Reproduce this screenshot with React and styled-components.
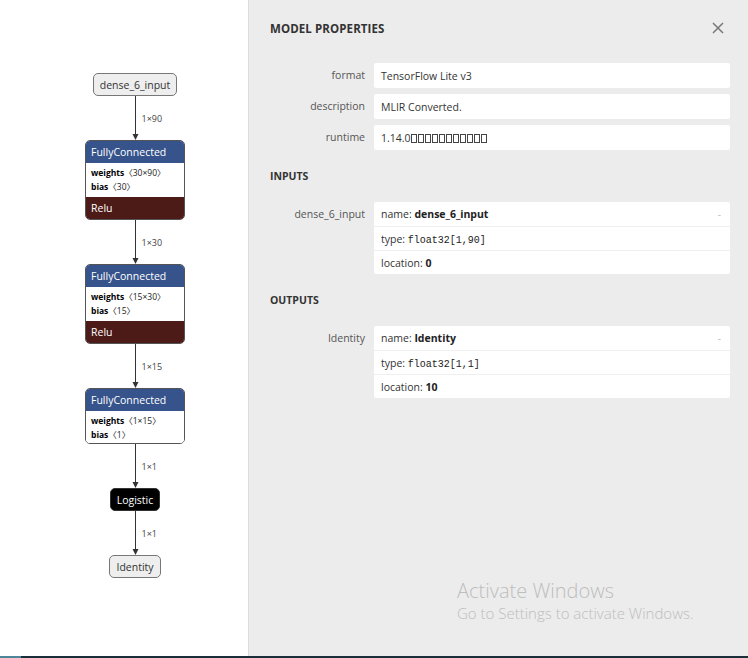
import styled, { createGlobalStyle } from "styled-components";

const GlobalStyle = createGlobalStyle`
    html, body {
        margin: 0;
        padding: 0;
        overflow: hidden;
    }
    body {
        font-family: "Open Sans", "Noto Sans", "Noto Sans CJK SC", sans-serif;
        color: #333;
    }
`

const Page = styled.div`
    position: relative;
    width: 748px;
    height: 658px;
    display: flex;
    flex-direction: column;
`

const Main = styled.div`
    flex: 1;
    display: flex;
    min-height: 0;
`

const Taskbar = styled.div`
    height: 2px;
    background: linear-gradient(to right, #4b8798 0, #4b8798 21px, #1c2e3a 21px);
`

/* left: graph */

const GraphPanel = styled.div`
    width: 249px;
    background: #fff;
    border-right: 1px solid #dcdcdc;
    padding-top: 73px;
    box-sizing: border-box;
`

const Column = styled.div`
    width: 100px;
    margin-left: 85px;
    display: flex;
    flex-direction: column;
    align-items: center;
`

const IONode = styled.div`
    height: 23px;
    box-sizing: border-box;
    padding: 0 6px;
    display: flex;
    align-items: center;
    background: ${props => props.dark ? '#000' : '#eee'};
    color: ${props => props.dark ? '#fff' : '#333'};
    border: 1px solid ${props => props.dark ? '#333' : '#777'};
    border-radius: 5px;
    font-size: 10.5px;
    white-space: nowrap;
`

const OpNode = styled.div`
    width: 100px;
    border: 1px solid #555;
    border-radius: 5px;
    overflow: hidden;
    box-sizing: border-box;
`

const OpBar = styled.div`
    height: 22px;
    display: flex;
    align-items: center;
    padding: 0 5px;
    background: ${props => props.color};
    color: #fff;
    font-size: 10.5px;
`

const OpBody = styled.div`
    background: #fff;
    padding: ${props => props.last ? '3px 5px 1px' : '3px 5px'};
    font-size: 8.5px;
    line-height: 14px;
    color: #222;
    b {
        font-weight: 700;
        color: #000;
    }
`

const EdgeRow = styled.div`
    width: 100%;
    height: 44px;
    display: grid;
    grid-template-columns: 1fr 9px 1fr;
    svg {
        display: block;
    }
`

const EdgeLabel = styled.span`
    align-self: center;
    padding-left: 2px;
    font-size: 9px;
    color: #444;
`

const Edge = props => {
    return (
        <EdgeRow>
            <span/>
            <svg width="9" height="44" viewBox="0 0 9 44">
                <line x1="4.5" y1="0" x2="4.5" y2="39" stroke="#333" strokeWidth="1"/>
                <path d="M1.5 38 L7.5 38 L4.5 44 Z" fill="#333"/>
            </svg>
            <EdgeLabel>{props.label}</EdgeLabel>
        </EdgeRow>
    )
}

const Attr = props => (
    <div><b>{props.name}</b>〈{props.value}〉</div>
)

const FullyConnected = props => {
    return (
        <OpNode>
            <OpBar color="#36538b">FullyConnected</OpBar>
            <OpBody last={!props.relu}>
                <Attr name="weights" value={props.weights}/>
                <Attr name="bias" value={props.bias}/>
            </OpBody>
            {props.relu && <OpBar color="#4c1a17">Relu</OpBar>}
        </OpNode>
    )
}

/* right: properties */

const PropsPanel = styled.div`
    flex: 1;
    background: #ececec;
    padding: 20px 18px 0 20px;
    box-sizing: border-box;
`

const Header = styled.div`
    display: flex;
    align-items: center;
    justify-content: space-between;
    height: 16px;
    margin-bottom: 27px;
`

const Title = styled.h2`
    margin: 0 0 0 1px;
    font-size: 11.5px;
    font-weight: 700;
    color: #333;
    letter-spacing: 0.1px;
`

const CloseButton = styled.div`
    display: flex;
    margin-right: 6px;
    cursor: pointer;
`

const SectionTitle = styled.h3`
    margin: 18px 0 18px 1px;
    height: 16px;
    line-height: 16px;
    font-size: 10.5px;
    font-weight: 700;
    color: #333;
`

const PropList = styled.div`
    display: flex;
    flex-direction: column;
    gap: 6px;
`

const PropRow = styled.div`
    display: grid;
    grid-template-columns: 96px 1fr;
    column-gap: 9px;
`

const PropName = styled.div`
    text-align: right;
    font-size: 10.5px;
    line-height: 25px;
    color: #555;
`

const ValueBox = styled.div`
    background: #fff;
    border-radius: 2px;
    overflow: hidden;
`

const ValueLine = styled.div`
    height: ${props => props.h || 24}px;
    display: flex;
    align-items: center;
    justify-content: space-between;
    padding: 0 9px 0 7px;
    font-size: 10.5px;
    color: #333;
    & + & {
        border-top: 1px solid #efefef;
        height: ${props => (props.h || 24) - 1}px;
    }
    b {
        font-weight: 700;
        color: #222;
    }
    code {
        font-family: "Liberation Mono", "DejaVu Sans Mono", monospace;
        font-size: 10px;
        color: #222;
    }
`

const Tofu = styled.span`
    display: inline-block;
    width: 4px;
    height: 7px;
    border: 1px solid #444;
    margin-right: 1px;
    vertical-align: -1px;
`

const Dash = styled.span`
    color: #bbb;
    font-size: 10px;
`

const Watermark = styled.div`
    position: absolute;
    left: 457px;
    top: 577px;
    color: #bdbdbd;
    font-family: "Open Sans", "Noto Sans", sans-serif;
    font-weight: 300;
    pointer-events: none;
    div:first-child {
        font-size: 20px;
        line-height: 27px;
    }
    div:last-child {
        font-size: 15px;
        line-height: 19px;
    }
`

const Argument = props => {
    return (
        <PropRow>
            <PropName>{props.name}</PropName>
            <ValueBox>
                <ValueLine>
                    <span>name: <b>{props.name}</b></span>
                    <Dash>-</Dash>
                </ValueLine>
                <ValueLine>
                    <span>type: <code>{props.type}</code></span>
                </ValueLine>
                <ValueLine>
                    <span>location: <b>{props.location}</b></span>
                </ValueLine>
            </ValueBox>
        </PropRow>
    )
}

const Runtime = () => (
    <span>
        1.14.0
        {Array.from({length: 11}).map((_, i) => <Tofu key={i}/>)}
    </span>
)

const metadata = [
    ['format', 'TensorFlow Lite v3'],
    ['description', 'MLIR Converted.'],
    ['runtime', <Runtime/>],
]

const App = () => {
    return (
        <Page>
            <GlobalStyle/>
            <Main>
                <GraphPanel>
                    <Column>
                        <IONode>dense_6_input</IONode>
                        <Edge label="1×90"/>
                        <FullyConnected weights="30×90" bias="30" relu/>
                        <Edge label="1×30"/>
                        <FullyConnected weights="15×30" bias="15" relu/>
                        <Edge label="1×15"/>
                        <FullyConnected weights="1×15" bias="1"/>
                        <Edge label="1×1"/>
                        <IONode dark>Logistic</IONode>
                        <Edge label="1×1"/>
                        <IONode>Identity</IONode>
                    </Column>
                </GraphPanel>
                <PropsPanel>
                    <Header>
                        <Title>MODEL PROPERTIES</Title>
                        <CloseButton>
                            <svg width="12" height="12" viewBox="0 0 12 12">
                                <path d="M1 1 L11 11 M11 1 L1 11" stroke="#777" strokeWidth="1.5"/>
                            </svg>
                        </CloseButton>
                    </Header>
                    <PropList>
                        {metadata.map(([name, value]) => (
                            <PropRow key={name}>
                                <PropName>{name}</PropName>
                                <ValueBox>
                                    <ValueLine h={25}>{value}</ValueLine>
                                </ValueBox>
                            </PropRow>
                        ))}
                    </PropList>
                    <SectionTitle>INPUTS</SectionTitle>
                    <Argument name="dense_6_input" type="float32[1,90]" location="0"/>
                    <SectionTitle>OUTPUTS</SectionTitle>
                    <Argument name="Identity" type="float32[1,1]" location="10"/>
                </PropsPanel>
            </Main>
            <Taskbar/>
            <Watermark>
                <div>Activate Windows</div>
                <div>Go to Settings to activate Windows.</div>
            </Watermark>
        </Page>
    )
}

export default App
